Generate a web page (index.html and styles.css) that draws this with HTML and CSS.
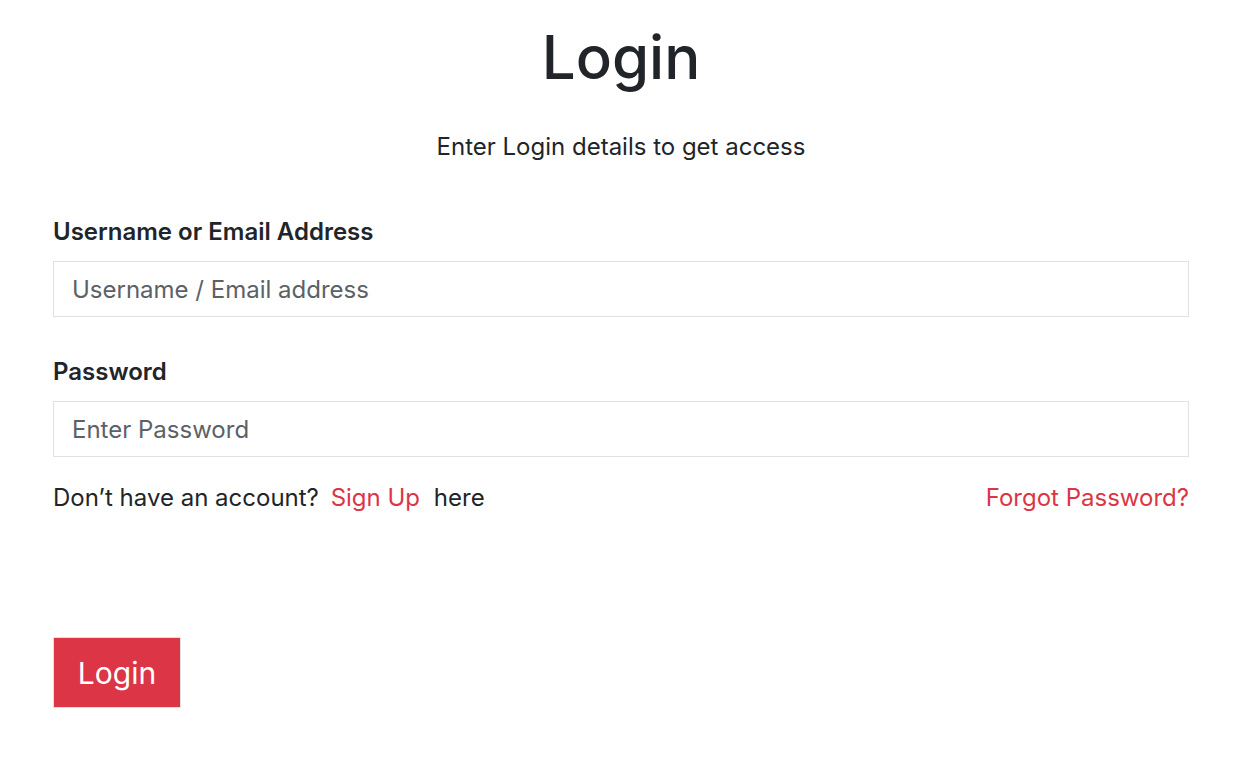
FILE: index.html
```html
<!DOCTYPE html>
<html lang="en">
<head>
<meta charset="utf-8">
<title>Login</title>
<link rel="stylesheet" href="styles.css">
</head>
<body>
<main class="login">
  <h1 class="login-title">Login</h1>
  <p class="login-sub">Enter Login details to get access</p>
  <form class="login-form">
    <div class="field">
      <label class="field-label" for="user">Username or Email Address</label>
      <input class="field-input" id="user" type="text" placeholder="Username / Email address">
    </div>
    <div class="field">
      <label class="field-label" for="pass">Password</label>
      <input class="field-input" id="pass" type="password" placeholder="Enter Password">
    </div>
    <div class="links">
      <span>Don’t have an account? <a href="#" class="red signup-link">Sign Up</a> here</span>
      <a href="#" class="red">Forgot Password?</a>
    </div>
    <button type="button" class="btn">Login</button>
  </form>
</main>
</body>
</html>
```
FILE: styles.css
```css
* { box-sizing: border-box; }
body {
  margin: 0;
  font-family: Inter, "Noto Sans", sans-serif;
  color: #212529;
  background: #fff;
}
.login {
  padding: 21px 60px 0 53px;
}
.login-title {
  margin: 0;
  text-align: center;
  font-size: 60px;
  font-weight: 500;
  line-height: 1.2;
}
.login-sub {
  margin: 36px 0 0;
  text-align: center;
  font-size: 24px;
  line-height: 1.5;
}
.login-form {
  margin-top: 49px;
}
.field {
  display: flex;
  flex-direction: column;
  margin-bottom: 37px;
}
.field-label {
  font-size: 24px;
  font-weight: 600;
  line-height: 1.5;
  margin-bottom: 11px;
}
.field-input {
  height: 56px;
  border: 1px solid #dee2e6;
  border-radius: 0;
  padding: 0 18px;
  font-family: inherit;
  font-size: 24px;
  color: #212529;
  outline: none;
}
.field-input::placeholder {
  color: #5c6167;
  opacity: 1;
}
.links {
  display: flex;
  justify-content: space-between;
  font-size: 24px;
  line-height: 1.5;
  margin-top: -14px;
}
.red { color: #dc3545; text-decoration: none; }
.signup-link { margin: 0 7px 0 5px; }
.btn {
  display: block;
  margin-top: 121px;
  width: 128px;
  height: 71px;
  background: #dc3545;
  border: 1px solid #dee2e6;
  color: #fff;
  font-family: inherit;
  font-size: 30px;
  border-radius: 0;
  padding: 0;
}
```
